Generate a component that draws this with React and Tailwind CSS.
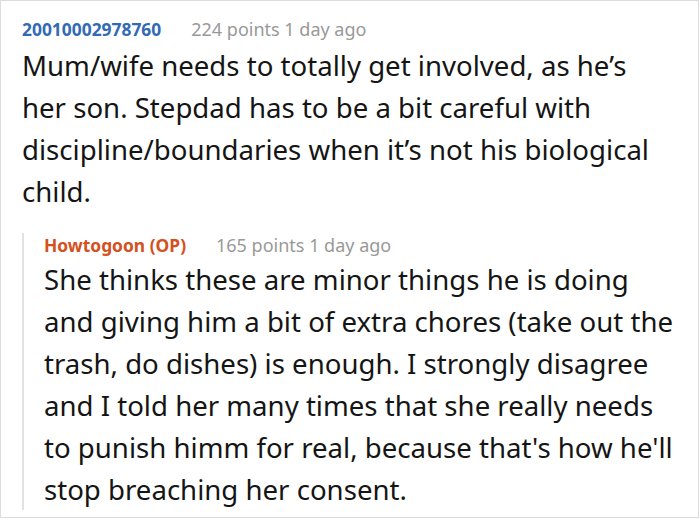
export default function App() {
  const font = { fontFamily: '"Noto Sans", "Open Sans", sans-serif' };
  return (
    <div className="w-[700px] h-[520px] bg-white" style={font}>
      <div className="w-[699px] h-[518px] border border-[#dcdcdc] pt-[16px] pl-[21px] pr-[19px] overflow-hidden">
        <div className="flex items-baseline gap-[30px] text-[18px] leading-[24px]">
          <span className="font-bold text-[17.4px] text-[#336ab5]">20010002978760</span>
          <span className="text-[#999999]">224 points 1 day ago</span>
        </div>
        <div className="mt-[3px] pr-[14px] text-[27.6px] leading-[42px] text-[#151515]">
          Mum/wife needs to totally get involved, as he’s her son. Stepdad has to be a bit careful with discipline/boundaries when it’s not his biological child.
        </div>
        <div className="mt-[30px] border-l-2 border-[#e2e2e2] pl-[20px]">
          <div className="-mt-[9px] -mb-[8px]">
            <div className="flex items-baseline gap-[30px] text-[18px] leading-[24px]">
              <span className="font-bold text-[17.4px] text-[#d4501e]">Howtogoon (OP)</span>
              <span className="text-[#999999]">165 points 1 day ago</span>
            </div>
            <div className="mt-[1px] text-[27.6px] leading-[42px] text-[#151515]">
              She thinks these are minor things he is doing and giving him a bit of extra chores (take out the trash, do dishes) is enough. I strongly disagree and I told her many times that she really needs to punish himm for real, because that's how he'll stop breaching her consent.
            </div>
          </div>
        </div>
      </div>
    </div>
  );
}
